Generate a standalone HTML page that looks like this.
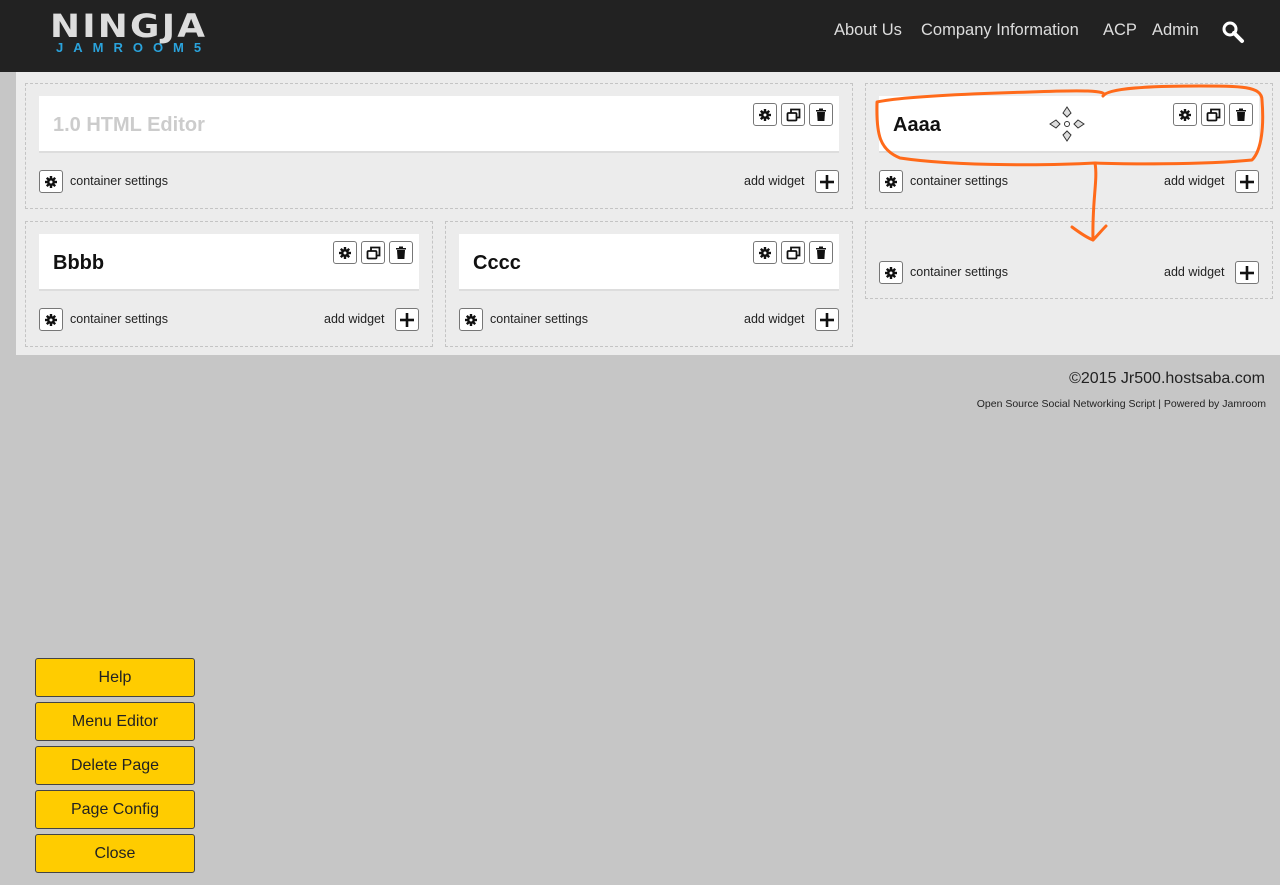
<!DOCTYPE html>
<html><head><meta charset="utf-8"><style>
*{box-sizing:border-box;margin:0;padding:0}
body{width:1280px;height:885px;background:#c6c6c6;font-family:"Liberation Sans",sans-serif;position:relative;overflow:hidden;color:#111}
.hdr{position:absolute;left:0;top:0;width:1280px;height:72px;background:#222}
.nav{position:absolute;top:21px;color:#ddd;font-size:16.5px}
.main{position:absolute;left:16px;top:72px;width:1264px;height:283px;background:#ececec}
.ct{position:absolute;border:1px dashed #c4c4c4}
.wg{position:absolute;background:#fff;border-bottom:2px solid #ddd;height:57px}
.wg h2{position:absolute;left:14px;top:18px;font-size:20px;font-weight:bold}
.btn{position:absolute;width:24px;height:23px;background:#fff;border:1px solid #777;border-radius:3px;display:flex;align-items:center;justify-content:center}
.lbl{position:absolute;font-size:12.5px;color:#222}
.yb{position:absolute;left:35px;width:160px;height:39px;background:#ffcc00;border:1px solid #444;border-radius:3px;font-size:16px;text-align:center;line-height:38px;color:#222}
</style></head><body>
<svg width="0" height="0" style="position:absolute"><defs>
<g id="gear"><circle cx="0" cy="0" r="4" fill="#111"/><g stroke="#111" stroke-width="2.4"><line x1="0" y1="-6" x2="0" y2="6"/><line x1="-6" y1="0" x2="6" y2="0"/><line x1="-4.2" y1="-4.2" x2="4.2" y2="4.2"/><line x1="-4.2" y1="4.2" x2="4.2" y2="-4.2"/></g><circle r="1.5" fill="#fff"/></g>
<g id="win" fill="none" stroke="#111" stroke-width="1.8"><rect x="-5.5" y="-2" width="9" height="7.5" rx="1"/><path d="M-2,-2V-5.5H6.5V2.5H3.5"/></g>
<g id="trash" fill="#111"><rect x="-5" y="-5" width="10" height="1.5"/><rect x="-2" y="-6.5" width="4" height="1.5"/><path d="M-4,-3H4L3.4,6H-3.4Z"/></g>
<g id="plus" stroke="#111" stroke-width="2.6"><line x1="-7" y1="0" x2="7" y2="0"/><line x1="0" y1="-7" x2="0" y2="7"/></g>
</defs></svg>
<div class="hdr">
<div style="position:absolute;left:50px;top:10px;font-size:32px;font-weight:bold;color:#ddd;letter-spacing:2px;transform:scaleX(1.12);transform-origin:left;font-family:'DejaVu Sans',sans-serif;line-height:32px">NINGJA</div>
<div style="position:absolute;left:56px;top:40px;font-size:13px;font-weight:bold;color:#2aa3dc;letter-spacing:10px">JAMROOM5</div>
<div class="nav" style="left:834px">About Us</div>
<div class="nav" style="left:921px">Company Information</div>
<div class="nav" style="left:1103px">ACP</div>
<div class="nav" style="left:1152px">Admin</div>
<svg style="position:absolute;left:1221px;top:20px" width="24" height="24"><circle cx="9" cy="9" r="6" fill="none" stroke="#fff" stroke-width="3"/><line x1="13" y1="13" x2="21" y2="21" stroke="#fff" stroke-width="4" stroke-linecap="round"/></svg>
</div>
<div class="main"></div>

<div class="ct" style="left:25px;top:83px;width:828px;height:126px"></div>
<div class="ct" style="left:865px;top:83px;width:408px;height:126px"></div>
<div class="ct" style="left:25px;top:221px;width:408px;height:126px"></div>
<div class="ct" style="left:445px;top:221px;width:408px;height:126px"></div>
<div class="ct" style="left:865px;top:221px;width:408px;height:78px"></div>

<div class="wg" style="left:39px;top:96px;width:800px"><h2 style="color:#ccc">1.0 HTML Editor</h2></div>
<div class="wg" style="left:879px;top:96px;width:380px"><h2>Aaaa</h2></div>
<div class="wg" style="left:39px;top:234px;width:380px"><h2>Bbbb</h2></div>
<div class="wg" style="left:459px;top:234px;width:380px"><h2>Cccc</h2></div>

<div id="icons"></div>
<script>
var h='';
function b(x,y,id){h+='<div class="btn" style="left:'+x+'px;top:'+y+'px"><svg width="16" height="16" viewBox="-8 -8 16 16"><use href="#'+id+'"/></svg></div>';}
function trio(x,y){b(x,y,'gear');b(x+28,y,'win');b(x+56,y,'trash');}
trio(753,103);trio(1173,103);trio(333,241);trio(753,241);
function foot(x,y,w){b(x,y,'gear');h+='<div class="lbl" style="left:'+(x+31)+'px;top:'+(y+4)+'px">container settings</div>';h+='<div class="lbl" style="left:'+(x+w-95)+'px;top:'+(y+4)+'px">add widget</div>';b(x+w-24,y,'plus');}
foot(39,170,800);foot(879,170,380);foot(39,308,380);foot(459,308,380);foot(879,261,380);
document.getElementById('icons').innerHTML=h;
</script>

<svg style="position:absolute;left:1049px;top:106px" width="36" height="36" viewBox="0 0 36 36" fill="#ddd" stroke="#333" stroke-width="1"><path d="M18,1L22,7L18,11L14,7Z"/><path d="M18,35L22,29L18,25L14,29Z"/><path d="M1,18L7,14L11,18L7,22Z"/><path d="M35,18L29,14L25,18L29,22Z"/><circle cx="18" cy="18" r="2.5" fill="#fff"/></svg>

<svg style="position:absolute;left:0;top:0" width="1280" height="300" fill="none" stroke="#ff6a1a" stroke-width="3" stroke-linecap="round" stroke-linejoin="round">
<path d="M1103,96C1108,88 1150,86 1200,86C1240,86 1262,86 1262,100C1264,125 1262,150 1252,160C1200,165 1120,164 1095,163C1060,165 960,167 900,158C880,150 876,135 877,102C900,97 960,94 1030,92C1080,90 1110,90 1103,96"/>
<path d="M1095,163C1098,180 1092,200 1093,240"/>
<path d="M1072,227C1080,233 1088,238 1093,240C1097,236 1102,230 1106,226"/>
</svg>

<div style="position:absolute;right:15px;top:370px;font-size:16px;color:#222">©2015 Jr500.hostsaba.com</div>
<div style="position:absolute;right:14px;top:398px;font-size:10.5px;color:#222">Open Source Social Networking Script | Powered by Jamroom</div>

<div class="yb" style="top:658px">Help</div>
<div class="yb" style="top:702px">Menu Editor</div>
<div class="yb" style="top:746px">Delete Page</div>
<div class="yb" style="top:790px">Page Config</div>
<div class="yb" style="top:834px">Close</div>
</body></html>
